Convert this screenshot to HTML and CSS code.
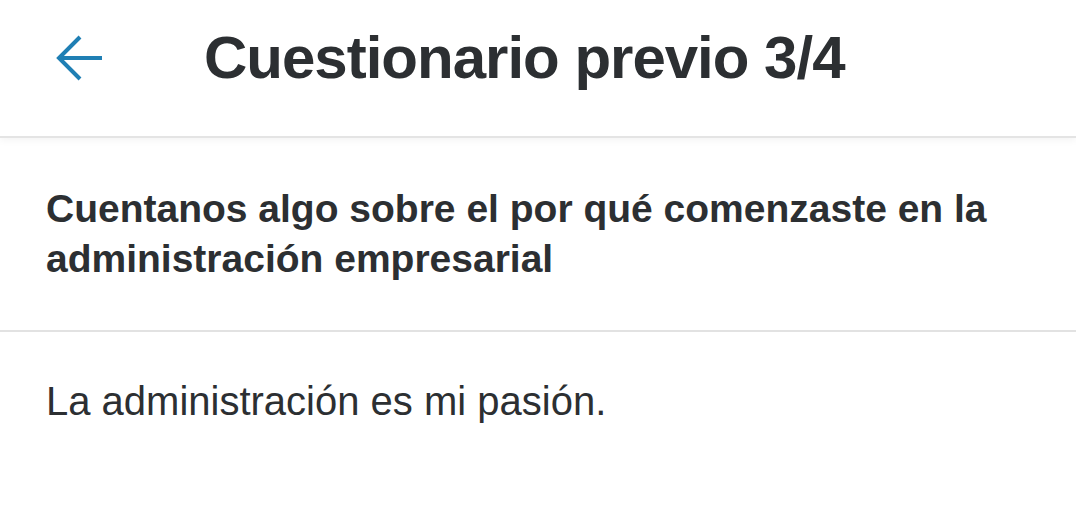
FILE: index.html
```html
<!DOCTYPE html>
<html lang="es">
<head>
<meta charset="utf-8">
<title>Cuestionario previo 3/4</title>
<link rel="stylesheet" href="styles.css">
</head>
<body>
<header class="appbar">
  <button class="back" aria-label="Atrás">
    <svg width="46" height="46" viewBox="0 0 46 46" fill="none" stroke="#1f7fb4" stroke-width="4" stroke-linecap="butt" stroke-linejoin="miter">
      <line x1="3" y1="23" x2="46" y2="23"/>
      <polyline points="24,2 3,23 24,44"/>
    </svg>
  </button>
  <h1 class="title">Cuestionario previo 3/4</h1>
</header>
<main class="content">
  <section class="question">Cuentanos algo sobre el por qué comenzaste en la administración empresarial</section>
  <section class="answer">La administración es mi pasión.</section>
</main>
</body>
</html>
```

FILE: styles.css
```css
html, body {
  margin: 0;
  padding: 0;
}
body {
  background: #ffffff;
  font-family: "Liberation Sans", Arial, sans-serif;
  color: #2c2f32;
  width: 1076px;
  height: 525px;
  overflow: hidden;
}
.appbar {
  height: 136px;
  background: #ffffff;
  display: flex;
  align-items: center;
  padding-left: 56px;
  border-bottom: 2px solid #e4e4e4;
  box-shadow: 0 2px 8px rgba(0,0,0,0.05);
  position: relative;
}
.back {
  border: 0;
  background: none;
  padding: 0;
  width: 46px;
  height: 46px;
  display: flex;
  margin-top: -20px;
}
.title {
  margin: -22px 0 0 102px;
  font-size: 60px;
  font-weight: 700;
  letter-spacing: -1px;
  color: #2c2f32;
}
.content {
  display: flex;
  flex-direction: column;
}
.question {
  padding: 46px 46px 46px 46px;
  font-size: 39px;
  line-height: 50px;
  font-weight: 700;
  border-bottom: 2px solid #e2e2e2;
}
.answer {
  padding: 44px 46px;
  font-size: 40px;
  line-height: 50px;
  font-weight: 400;
}
```
